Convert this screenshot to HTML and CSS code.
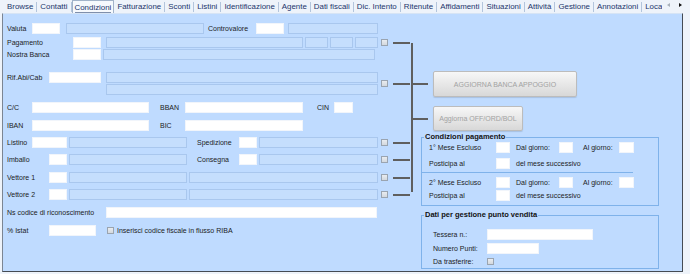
FILE: index.html
```html
<!DOCTYPE html>
<html lang="it">
<head>
    <meta charset="UTF-8">
    <title>Anagrafica | Condizioni</title>
    <link rel="stylesheet" href="styles.css">
</head>
<body>
    <div class="tabs">
        <div class="tab-list">
            <span class="tab">Browse</span>
            <span class="tab">Contatti</span>
            <span class="tab active"><span class="focus">Condizioni</span></span>
            <span class="tab">Fatturazione</span>
            <span class="tab">Sconti</span>
            <span class="tab">Listini</span>
            <span class="tab">Identificazione</span>
            <span class="tab">Agente</span>
            <span class="tab">Dati fiscali</span>
            <span class="tab">Dic. Intento</span>
            <span class="tab">Ritenute</span>
            <span class="tab">Affidamenti</span>
            <span class="tab">Situazioni</span>
            <span class="tab">Attività</span>
            <span class="tab">Gestione</span>
            <span class="tab">Annotazioni</span>
            <span class="tab cut">Loca</span>
        </div>
        <div class="tab-scroll">
            <span class="arrow left"></span>
            <span class="arrow right"></span>
        </div>
    </div>

    <div class="panel">
        <!-- colonna campi -->
        <div class="form">
            <div class="row r-valuta">
                <span class="lbl lbl-s">Valuta</span>
                <span class="in code"></span>
                <span class="ro desc"></span>
                <span class="lbl lbl-cv">Controvalore</span>
                <span class="in code"></span>
                <span class="ro cv"></span>
            </div>
            <div class="row r-pag">
                <span class="lbl lbl-l">Pagamento</span>
                <span class="in code"></span>
                <span class="ro pag"></span>
                <span class="ro rata"></span>
                <span class="ro rata"></span>
                <span class="ro rata"></span>
                <span class="chk"></span>
                <span class="link"></span>
            </div>
            <div class="row r-banca">
                <span class="lbl lbl-l">Nostra Banca</span>
                <span class="in code"></span>
                <span class="ro full"></span>
            </div>
            <div class="row r-abi">
                <span class="lbl lbl-m">Rif.Abi/Cab</span>
                <span class="in abi"></span>
                <div class="ro-stack">
                    <span class="ro full"></span>
                    <span class="ro full"></span>
                </div>
                <span class="chk"></span>
                <span class="link"></span>
            </div>
            <div class="row r-cc">
                <span class="lbl lbl-s">C/C</span>
                <span class="in cc"></span>
                <span class="lbl lbl-bank">BBAN</span>
                <span class="in bban"></span>
                <span class="lbl lbl-cin">CIN</span>
                <span class="in cin"></span>
            </div>
            <div class="row r-iban">
                <span class="lbl lbl-s">IBAN</span>
                <span class="in cc"></span>
                <span class="lbl lbl-bank">BIC</span>
                <span class="in bban"></span>
            </div>
            <div class="row r-listino">
                <span class="lbl lbl-s">Listino</span>
                <span class="in list"></span>
                <span class="ro half"></span>
                <span class="lbl lbl-mid">Spedizione</span>
                <span class="in tiny"></span>
                <span class="ro half2"></span>
                <span class="chk"></span>
                <span class="link"></span>
            </div>
            <div class="row r-imballo">
                <span class="lbl lbl-m">Imballo</span>
                <span class="in tiny"></span>
                <span class="ro half"></span>
                <span class="lbl lbl-mid">Consegna</span>
                <span class="in tiny"></span>
                <span class="ro half2"></span>
                <span class="chk"></span>
                <span class="link"></span>
            </div>
            <div class="row r-vet1">
                <span class="lbl lbl-m">Vettore 1</span>
                <span class="in tiny"></span>
                <span class="ro half"></span>
                <span class="ro vet"></span>
                <span class="chk"></span>
                <span class="link"></span>
            </div>
            <div class="row r-vet2">
                <span class="lbl lbl-m">Vettore 2</span>
                <span class="in tiny"></span>
                <span class="ro half"></span>
                <span class="ro vet"></span>
                <span class="chk"></span>
                <span class="link"></span>
            </div>
            <div class="row r-ns">
                <span class="lbl lbl-xl">Ns codice di riconoscimento</span>
                <span class="in ns"></span>
            </div>
            <div class="row r-istat">
                <span class="lbl lbl-m">% Istat</span>
                <span class="in istat"></span>
                <span class="chk chk-riba"></span>
                <span class="lbl lbl-riba">Inserisci codice fiscale in flusso RIBA</span>
            </div>
        </div>

        <!-- pulsanti e gruppi -->
        <div class="side">
            <div class="bracket"></div>
            <div class="side-main">
                <div class="btn-row first">
                    <span class="btn-link"></span>
                    <button class="btn btn-banca">AGGIORNA BANCA APPOGGIO</button>
                </div>
                <div class="btn-row">
                    <span class="btn-link"></span>
                    <button class="btn btn-docs">Aggiorna OFF/ORD/BOL</button>
                </div>

                <fieldset class="group g-pag">
                    <legend>Condizioni pagamento</legend>
                    <div class="grow">
                        <span class="lbl g-lbl">1° Mese Escluso</span>
                        <span class="in day"></span>
                        <span class="lbl lbl-dal">Dal giorno:</span>
                        <span class="in day"></span>
                        <span class="lbl lbl-al">Al giorno:</span>
                        <span class="in day day-al"></span>
                    </div>
                    <div class="grow g-post">
                        <span class="lbl g-lbl">Posticipa al</span>
                        <span class="in day"></span>
                        <span class="lbl lbl-dal">del mese successivo</span>
                    </div>
                    <div class="g-sep"></div>
                    <div class="grow g-second">
                        <span class="lbl g-lbl">2° Mese Escluso</span>
                        <span class="in day"></span>
                        <span class="lbl lbl-dal">Dal giorno:</span>
                        <span class="in day"></span>
                        <span class="lbl lbl-al">Al giorno:</span>
                        <span class="in day day-al"></span>
                    </div>
                    <div class="grow g-post2">
                        <span class="lbl g-lbl">Posticipa al</span>
                        <span class="in day"></span>
                        <span class="lbl lbl-dal">del mese successivo</span>
                    </div>
                </fieldset>

                <fieldset class="group g-pv">
                    <legend>Dati per gestione punto vendita</legend>
                    <div class="grow pv-first">
                        <span class="lbl pv-lbl">Tessera n.:</span>
                        <span class="in tessera"></span>
                    </div>
                    <div class="grow pv-next">
                        <span class="lbl pv-lbl">Numero Punti:</span>
                        <span class="in punti"></span>
                    </div>
                    <div class="grow pv-last">
                        <span class="lbl pv-lbl">Da trasferire:</span>
                        <span class="chk"></span>
                    </div>
                </fieldset>
            </div>
        </div>
    </div>
</body>
</html>
```

FILE: styles.css
```css
:root {
    --panel: #bfdbff;
    --strip: #eef3fa;
    --ro-bg: #c5defd;
    --ro-border: #a9c7ee;
    --line: #5f5f5f;
    --group: #7fb2ea;
}

* {
    margin: 0;
    padding: 0;
    box-sizing: border-box;
}

body {
    width: 690px;
    height: 274px;
    overflow: hidden;
    background: var(--strip);
    font-family: 'Liberation Sans', Arial, sans-serif;
    font-size: 7px;
    color: #1c1c1c;
}

/* tab strip */
.tabs {
    display: flex;
    height: 13px;
}

.tab-list {
    display: flex;
    align-items: flex-end;
    flex: 0 0 662px;
    width: 662px;
    padding-left: 4px;
    overflow: hidden;
    white-space: nowrap;
}

.tab {
    flex-shrink: 0;
    height: 10px;
    line-height: 10px;
    padding: 0 3px;
    margin-bottom: 1px;
    font-size: 7.9px;
    color: #22356b;
    border-right: 1px solid #b3c5dc;
}

.tab.active {
    height: 13px;
    margin-bottom: 0;
    padding: 2px 2px 0;
    background: #f6f9fd;
    border: 1px solid #a2b3c9;
    border-bottom: none;
}

.tab.cut {
    border-right: none;
}

.focus {
    display: inline-block;
    line-height: 9px;
    border-bottom: 1px solid #7f8fab;
}

.tab-scroll {
    display: flex;
    align-items: center;
    gap: 9px;
    padding-left: 5px;
    padding-bottom: 3px;
}

.arrow {
    width: 0;
    height: 0;
    border-top: 2px solid transparent;
    border-bottom: 2px solid transparent;
}

.arrow.left {
    border-right: 3px solid #a8b0ba;
}

.arrow.right {
    border-left: 3px solid #111;
}

/* panel */
.panel {
    display: flex;
    width: 681px;
    height: 259px;
    margin-left: 2px;
    background: var(--panel);
    border: 1px solid #454b54;
    border-top-color: #d6e4f5;
    border-left-color: #7b8593;
}

.form {
    width: 408px;
    padding: 9px 0 0 4px;
}

.row {
    display: flex;
    align-items: center;
    height: 11px;
    margin-top: 7px;
}

.r-valuta { margin-top: 0; }
.r-pag { margin-top: 3px; }
.r-banca { margin-top: 1px; }
.r-abi { margin-top: 12px; height: 23px; align-items: flex-start; }
.r-listino, .r-imballo, .r-vet2 { margin-top: 6px; }

.lbl {
    white-space: nowrap;
    line-height: 11px;
    flex-shrink: 0;
}

.lbl-s { width: 25px; }
.lbl-m { width: 42px; }
.lbl-l { width: 66px; }
.lbl-xl { width: 99px; }
.lbl-cv { width: 48px; margin-left: 4px; }
.lbl-bank { width: 25px; margin-left: 11px; }
.lbl-cin { width: 17px; margin-left: 14px; }
.lbl-mid { width: 42px; margin-left: 10px; }
.lbl-riba { margin-left: 3px; }

.in, .ro {
    display: block;
    height: 11px;
    flex-shrink: 0;
}

.in {
    background: #fff;
    border: 1px solid #f1f5fb;
}

.ro {
    background: var(--ro-bg);
    border: 1px solid var(--ro-border);
    margin-left: 2px;
}

.in.code { width: 28px; }
.in.abi { width: 52px; }
.in.cc { width: 117px; }
.in.bban { width: 118px; }
.in.cin { width: 19px; }
.in.list { width: 35px; }
.in.tiny { width: 18px; }
.in.istat { width: 47px; }
.in.ns { width: 271px; }

.ro.desc { width: 138px; margin-left: 6px; }
.ro.cv { width: 90px; margin-left: 4px; }
.ro.pag { width: 197px; margin-left: 5px; }
.ro.rata { width: 23px; }
.ro.full { width: 272px; }
.ro.half { width: 118px; }
.ro.half2 { width: 119px; }
.ro.vet { width: 189px; }

.ro-stack {
    display: flex;
    flex-direction: column;
    gap: 1px;
    margin-left: 3px;
}

.r-abi .chk,
.r-abi .link {
    align-self: center;
}

.chk {
    display: block;
    width: 7px;
    height: 7px;
    margin-left: 3px;
    flex-shrink: 0;
    background: linear-gradient(#e9ecf0, #d3d8de);
    border: 1px solid #9aa4b0;
}

.chk-riba { margin-left: 11px; }

.link {
    display: block;
    width: 17px;
    height: 2px;
    margin-left: 5px;
    background: var(--line);
}

/* right side */
.side {
    display: flex;
    flex: 1;
}

.bracket {
    width: 2px;
    height: 149px;
    margin-top: 29px;
    background: var(--line);
}

.side-main {
    display: flex;
    flex-direction: column;
}

.btn-row {
    display: flex;
    align-items: center;
    margin-top: 9px;
}

.btn-row.first { margin-top: 57px; }

.btn-link {
    width: 15px;
    height: 2px;
    margin-right: 5px;
    background: var(--line);
}

.btn {
    font-family: inherit;
    font-size: 7px;
    color: #a2a2a2;
    background: linear-gradient(#f7f7f7, #d8d8d8);
    border: 1px solid #bcbcbc;
    border-radius: 2px;
    box-shadow: 0 1px 1px rgba(0, 0, 0, 0.12);
}

.btn-banca { width: 144px; height: 26px; }
.btn-docs { width: 90px; height: 25px; }

.group {
    width: 238px;
    margin-left: 8px;
    border: 1px solid var(--group);
}

.group legend {
    margin-left: 2px;
    padding: 0 1px;
    font-size: 7.5px;
    font-weight: bold;
    line-height: 10px;
    color: #111;
}

.g-pag {
    margin-top: 1px;
    padding-bottom: 4px;
}

.g-pv {
    margin-top: 4px;
    padding-bottom: 1px;
}

.grow {
    display: flex;
    align-items: center;
    height: 11px;
}

.g-post { margin-top: 5px; }
.g-second { margin-top: 4px; }
.g-post2 { margin-top: 2px; }

.g-sep {
    width: 211px;
    height: 1px;
    margin-top: 3px;
    background: var(--group);
}

.g-lbl { width: 67px; margin-left: 7px; }
.lbl-dal { width: 43px; margin-left: 6px; }
.lbl-al { width: 36px; margin-left: 10px; }

.in.day { width: 14px; }
.in.day-al { width: 15px; }

.pv-first { margin-top: 9px; }
.pv-next { margin-top: 3px; }
.pv-last { margin-top: 2px; }

.pv-lbl { width: 54px; margin-left: 11px; }
.pv-last .chk { margin-left: 0; }

.in.tessera { width: 106px; }
.in.punti { width: 52px; }
```
